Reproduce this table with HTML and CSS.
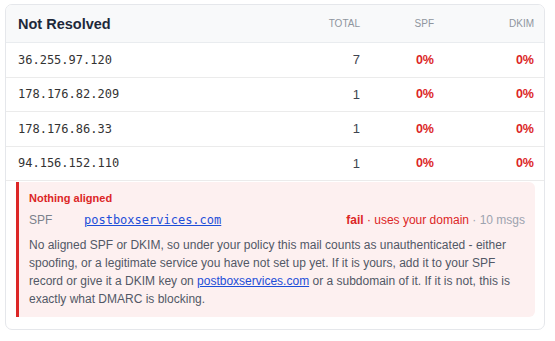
FILE: index.html
```html
<!DOCTYPE html>
<html>
<head>
<meta charset="utf-8">
<link rel="stylesheet" href="styles.css">
</head>
<body>
<div class="card">
  <div class="row head">
    <div class="title">Not Resolved</div>
    <div class="col">TOTAL</div>
    <div class="col">SPF</div>
    <div class="col">DKIM</div>
  </div>
  <div class="row">
    <div class="ip">36.255.97.120</div>
    <div class="num">7</div>
    <div class="pct">0%</div>
    <div class="pct">0%</div>
  </div>
  <div class="row">
    <div class="ip">178.176.82.209</div>
    <div class="num">1</div>
    <div class="pct">0%</div>
    <div class="pct">0%</div>
  </div>
  <div class="row">
    <div class="ip">178.176.86.33</div>
    <div class="num">1</div>
    <div class="pct">0%</div>
    <div class="pct">0%</div>
  </div>
  <div class="row">
    <div class="ip">94.156.152.110</div>
    <div class="num">1</div>
    <div class="pct">0%</div>
    <div class="pct">0%</div>
  </div>
  <div class="detail">
    <div class="alert">
      <div class="alert-title">Nothing aligned</div>
      <div class="auth">
        <span class="label">SPF</span>
        <a class="domain" href="#">postboxservices.com</a>
        <span class="status"><b class="fail">fail</b> <span class="red">· uses your domain</span> <span class="muted">· 10 msgs</span></span>
      </div>
      <p class="desc">No aligned SPF or DKIM, so under your policy this mail counts as unauthenticated - either spoofing, or a legitimate service you have not set up yet. If it is yours, add it to your SPF record or give it a DKIM key on <a href="#">postboxservices.com</a> or a subdomain of it. If it is not, this is exactly what DMARC is blocking.</p>
    </div>
  </div>
</div>
</body>
</html>
```

FILE: styles.css
```css
* { box-sizing: border-box; }
html, body { margin: 0; background: #fff; }
body {
  padding: 4px 10px 0 5px;
  font-family: "Liberation Sans", Arial, sans-serif;
}
.card {
  width: 540px;
  border: 1px solid #e5e7eb;
  border-radius: 7px;
  overflow: hidden;
  background: #fff;
}
.row {
  display: grid;
  grid-template-columns: 1fr 80px 74px 100px;
  align-items: center;
  height: 34.5px;
  padding: 0 10px 0 12px;
  border-bottom: 1px solid #ebebeb;
}
.row.head {
  height: 38px;
  background: #f8f9fa;
  border-bottom: 1px solid #e9ecef;
}
.title {
  font-size: 14.5px;
  font-weight: bold;
  color: #1e293b;
}
.col {
  text-align: right;
  font-size: 10px;
  color: #8f959e;
}
.ip {
  font-family: "DejaVu Sans Mono", monospace;
  font-size: 12px;
  color: #333;
}
.num {
  text-align: right;
  font-size: 13px;
  color: #3f4450;
}
.pct {
  text-align: right;
  font-size: 12.5px;
  font-weight: bold;
  color: #dc2626;
}
.detail {
  padding: 1px 9px 12px 10px;
}
.alert {
  background: #fdf0f0;
  border-left: 3px solid #dc2626;
  border-radius: 0 6px 6px 0;
  padding: 9px 10px 9px 10px;
}
.alert-title {
  font-size: 11px;
  font-weight: bold;
  color: #dc2626;
  line-height: 14px;
}
.auth {
  display: flex;
  align-items: baseline;
  margin-top: 7px;
  line-height: 16px;
}
.label {
  width: 55px;
  font-size: 12px;
  color: #7b818b;
}
.domain {
  font-family: "DejaVu Sans Mono", monospace;
  font-size: 12px;
  color: #1d4ed8;
}
.status {
  margin-left: auto;
  font-size: 12px;
}
.fail { color: #dc2626; }
.red { color: #dc2626; }
.muted { color: #9ca3af; }
.desc {
  margin: 8px 0 0;
  font-size: 12px;
  line-height: 18px;
  color: #525866;
}
.desc a { color: #1d4ed8; }
```
